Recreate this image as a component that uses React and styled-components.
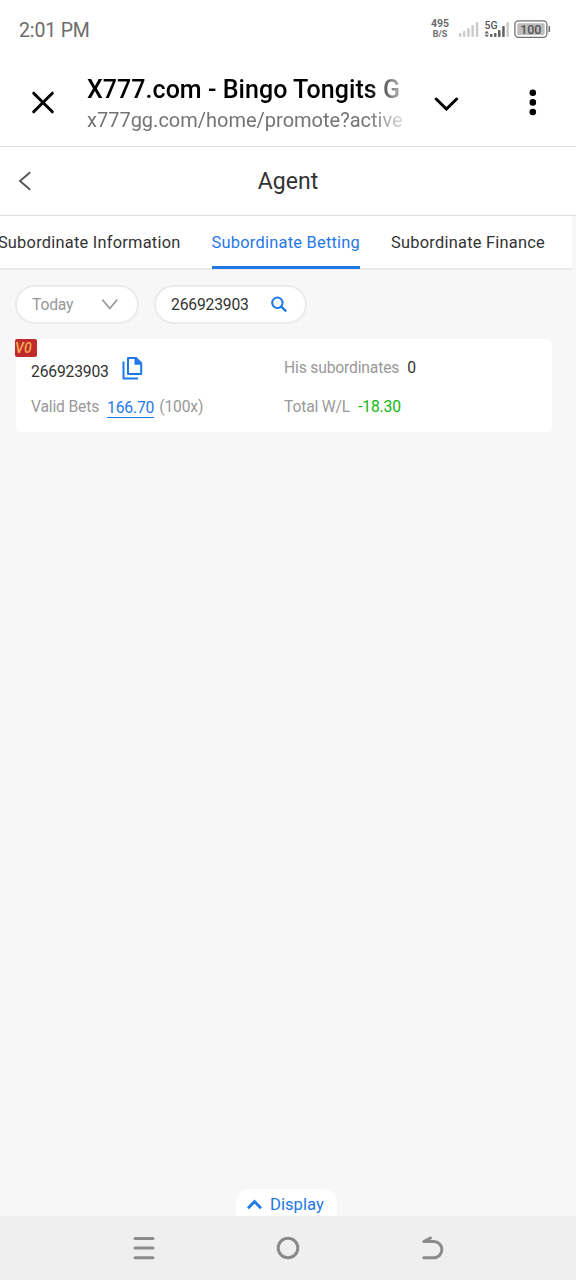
import React from "react";
import styled, { createGlobalStyle } from "styled-components";

const GlobalStyle = createGlobalStyle`
  * {
    box-sizing: border-box;
  }

  body {
    margin: 0;
    background: #f7f7f7;
    font-family: Roboto, "Liberation Sans", sans-serif;
  }
`;

const tabs = [
  { label: "Subordinate Information" },
  { label: "Subordinate Betting", active: true },
  { label: "Subordinate Finance" },
];

// Styled components
const Screen = styled.div`
  display: flex;
  flex-direction: column;
  height: 1280px;
  width: 576px;
  overflow: hidden;
  background: #f7f7f7;
`;

const StatusBar = styled.div`
  display: flex;
  align-items: center;
  height: 60px;
  padding: 0 25px 2px 19px;
  background: #fff;
  color: #6c6c6c;
`;

const Clock = styled.span`
  flex: 1;
  padding-top: 2px;
  font-size: 19.5px;
  letter-spacing: -0.15px;
`;

const NetSpeed = styled.div`
  width: 22px;
  margin-right: 8px;
  text-align: center;
  font-size: 10.5px;
  line-height: 10px;
  font-weight: 700;

  small {
    display: block;
    font-size: 9px;
  }
`;

const BrowserBar = styled.div`
  display: flex;
  align-items: center;
  height: 87px;
  padding: 0 39px 0 31px;
  background: #fff;
  border-bottom: 1px solid #dedede;
`;

const PageInfo = styled.div`
  width: 320px;
  margin: 1px 27px 0 32px;
  white-space: nowrap;
  mask-image: linear-gradient(to right, #000 280px, transparent 328px);
`;

const PageTitle = styled.div`
  font-size: 25px;
  line-height: 32px;
  font-weight: 500;
  letter-spacing: 0.04px;
  color: #000;
`;

const PageUrl = styled.div`
  font-size: 20px;
  line-height: 28px;
  color: #747474;
`;

const DropIcon = styled.svg`
  margin-right: auto;
`;

const Header = styled.header`
  display: grid;
  grid-template-columns: 60px 1fr 60px;
  align-items: center;
  height: 69px;
  background: #fff;
  border-bottom: 1.5px solid #e0e0e0;
`;

const BackIcon = styled.svg`
  margin-left: 18px;
`;

const Heading = styled.h1`
  margin: 0;
  padding-top: 1px;
  text-align: center;
  font-size: 23px;
  font-weight: 400;
  color: #333;
`;

const Tabs = styled.nav`
  display: flex;
  justify-content: flex-end;
  gap: 31px;
  width: 572px;
  height: 54px;
  padding-right: 27px;
  background: #fff;
  border-bottom: 2px solid #e9e9e9;
  white-space: nowrap;
`;

const Tab = styled.div`
  height: 53px;
  line-height: 53px;
  font-size: 16.4px;
  letter-spacing: 0.24px;
  color: ${(props) => (props.$active ? "#1f78e8" : "#333")};
  border-bottom: 3px solid ${(props) => (props.$active ? "#1f78e8" : "transparent")};
`;

const Filters = styled.div`
  display: flex;
  gap: 15px;
  padding: 15px 15px;
`;

const Pill = styled.div`
  display: flex;
  align-items: center;
  justify-content: space-between;
  width: ${(props) => props.$width}px;
  height: 39px;
  padding: 0 18px 1px 15px;
  border: 2px solid #ebebeb;
  border-radius: 20px;
  background: #fff;
  color: ${(props) => props.$color};
  font-size: 15.7px;
  letter-spacing: -0.18px;
`;

const Card = styled.section`
  position: relative;
  display: grid;
  grid-template-columns: 253px 1fr;
  grid-template-rows: 39px 39px;
  align-items: center;
  width: 536px;
  height: 93px;
  margin-left: 16px;
  padding: 9px 0 0 15px;
  border-radius: 7px;
  background: #fff;
  color: #999;
  font-size: 15.7px;
  letter-spacing: -0.18px;
`;

const Level = styled.span`
  position: absolute;
  left: -1px;
  top: 0;
  width: 22px;
  height: 18px;
  border-radius: 2px;
  background: #c02a2b;
  color: #f3ad55;
  font-size: 14px;
  line-height: 18px;
  font-weight: 500;
  font-style: italic;
  letter-spacing: 0.2px;
`;

const Member = styled.div`
  display: flex;
  align-items: center;
  gap: 13px;
  color: #333;

  span {
    padding-top: 7px;
  }
`;

const Stat = styled.div`
  display: flex;
  align-items: center;
  gap: 8px;
`;

const Value = styled.span`
  color: ${(props) => props.$color};
`;

const BetLink = styled.span`
  margin-top: 2px;
  margin-right: -3px;
  line-height: 19px;
  color: #1f78e8;
  border-bottom: 1px solid #1f78e8;
`;

const DisplayButton = styled.div`
  display: flex;
  align-items: center;
  gap: 8px;
  width: 101px;
  height: 27px;
  margin: auto auto 0 236px;
  padding: 4px 0 0 11px;
  border-radius: 14px 14px 0 0;
  background: #fff;
  color: #1f78e8;
  font-size: 16.7px;
`;

const NavBar = styled.div`
  display: flex;
  align-items: center;
  justify-content: space-between;
  height: 64px;
  padding: 0 131px;
  background: #efefef;
`;

const App = () => {
  return (
    <>
      <GlobalStyle />
      <Screen>
        <StatusBar>
          <Clock>2:01 PM</Clock>
          <NetSpeed>
            495<small>B/S</small>
          </NetSpeed>
          <svg width="92" height="20" viewBox="0 0 92 20">
            <g fill="#cbcbcb">
              <rect x="0" y="14" width="2.5" height="4" rx="1" />
              <rect x="4" y="12" width="2.5" height="6" rx="1" />
              <rect x="8.2" y="9" width="2.5" height="9" rx="1" />
              <rect x="12.4" y="6" width="2.5" height="12" rx="1" />
              <rect x="16.8" y="3" width="2.5" height="15" rx="1" />
              <rect x="47.4" y="3" width="2.5" height="15" rx="1" />
            </g>
            <g fill="#626262">
              <path d="M25.5 14.5 27.8 11.8 30 14.5zM25.5 15.8H30L27.8 18.3z" />
              <rect x="31" y="15" width="2.5" height="3" rx="0.8" />
              <rect x="35" y="14" width="2.5" height="4" rx="0.8" />
              <rect x="39" y="11" width="2.5" height="7" rx="0.8" />
              <rect x="43.2" y="7" width="2.5" height="11" rx="0.8" />
            </g>
            <text x="25.5" y="9.5" fontSize="10.5" fontWeight="500" fill="#555">
              5G
            </text>
            <rect x="55.9" y="1.9" width="32" height="16.4" rx="3.5" fill="none" stroke="#707070" strokeWidth="1.3" />
            <rect x="58.2" y="4.2" width="27.4" height="11.8" rx="1.5" fill="#bdbdbd" />
            <path d="M90.3 7v6" stroke="#707070" strokeWidth="1.6" />
            <text x="71.8" y="14.5" textAnchor="middle" fontSize="12.5" fontWeight="500" fill="#555">
              100
            </text>
          </svg>
        </StatusBar>

        <BrowserBar>
          <svg width="24" height="24" viewBox="0 0 24 24" stroke="#000" strokeWidth="3" strokeLinecap="round">
            <path d="M2.7 2.2 21.3 20.8M21.3 2.2 2.7 20.8" />
          </svg>
          <PageInfo>
            <PageTitle>X777.com - Bingo Tongits G</PageTitle>
            <PageUrl>x777gg.com/home/promote?active</PageUrl>
          </PageInfo>
          <DropIcon width="26" height="16" viewBox="0 0 26 16" fill="none" stroke="#000" strokeWidth="3" strokeLinecap="round">
            <path d="M2.2 4 12.4 14 22.6 4" />
          </DropIcon>
          <svg width="8" height="28" viewBox="0 0 8 28">
            <circle cx="3.8" cy="3.8" r="3.3" />
            <circle cx="3.8" cy="13.4" r="3.3" />
            <circle cx="3.8" cy="23" r="3.3" />
          </svg>
        </BrowserBar>

        <Header>
          <BackIcon width="14" height="20" viewBox="0 0 14 20" fill="none" stroke="#555" strokeWidth="1.9">
            <path d="M12.2 1.2 2 10 12.2 18.8" />
          </BackIcon>
          <Heading>Agent</Heading>
        </Header>

        <Tabs>
          {tabs.map((tab) => (
            <Tab key={tab.label} $active={tab.active}>
              {tab.label}
            </Tab>
          ))}
        </Tabs>

        <Filters>
          <Pill $width={124} $color="#999">
            Today
            <svg width="17" height="12" viewBox="0 0 17 12" fill="none" stroke="#999" strokeWidth="1.7">
              <path d="M0.3 1.5 7.8 10.5 15.3 1.5" />
            </svg>
          </Pill>
          <Pill $width={153} $color="#333">
            266923903
            <svg width="16" height="16" viewBox="0 0 16 16" fill="none" stroke="#1f78e8" strokeWidth="2">
              <circle cx="6.4" cy="6.8" r="5.2" />
              <path d="M10 10.4 15.2 15.4" strokeWidth="2.3" />
            </svg>
          </Pill>
        </Filters>

        <Card>
          <Level>V0</Level>
          <Member>
            <span>266923903</span>
            <svg width="21" height="24" viewBox="0 0 21 24" fill="none" stroke="#1f78e8" strokeWidth="2">
              <path d="M6 2H14L19.2 7.2V18H6Z" strokeLinejoin="round" />
              <path d="M12.5 1.5V8.8H20Z" fill="#1f78e8" stroke="none" />
              <path d="M1.5 5.5V22.5H16" strokeLinejoin="round" />
            </svg>
          </Member>
          <Stat>
            His subordinates <Value $color="#333">0</Value>
          </Stat>
          <Stat>
            Valid Bets <BetLink>166.70</BetLink> (100x)
          </Stat>
          <Stat>
            Total W/L <Value $color="#13b413">-18.30</Value>
          </Stat>
        </Card>

        <DisplayButton>
          <svg width="15" height="11" viewBox="0 0 15 11" fill="none" stroke="#1f78e8" strokeWidth="2.9">
            <path d="M1 9.2 7.5 2.5 14 9.2" />
          </svg>
          Display
        </DisplayButton>

        <NavBar>
          <svg width="26" height="26" viewBox="0 0 26 26" stroke="#8b8b8b" strokeWidth="3" strokeLinecap="round">
            <path d="M4 3.5H22M4 13H22M4 22.7H22" />
          </svg>
          <svg width="26" height="26" viewBox="0 0 26 26" fill="none" stroke="#8b8b8b" strokeWidth="3">
            <circle cx="13" cy="13" r="9.8" />
          </svg>
          <svg width="26" height="26" viewBox="0 0 26 26" fill="none" stroke="#8b8b8b" strokeWidth="3" strokeLinecap="round" strokeLinejoin="round">
            <path d="M11.5 3 4.8 6.5H14.8A8 8 0 0 1 14.8 22.7H4.8" />
          </svg>
        </NavBar>
      </Screen>
    </>
  );
};

export default App;
